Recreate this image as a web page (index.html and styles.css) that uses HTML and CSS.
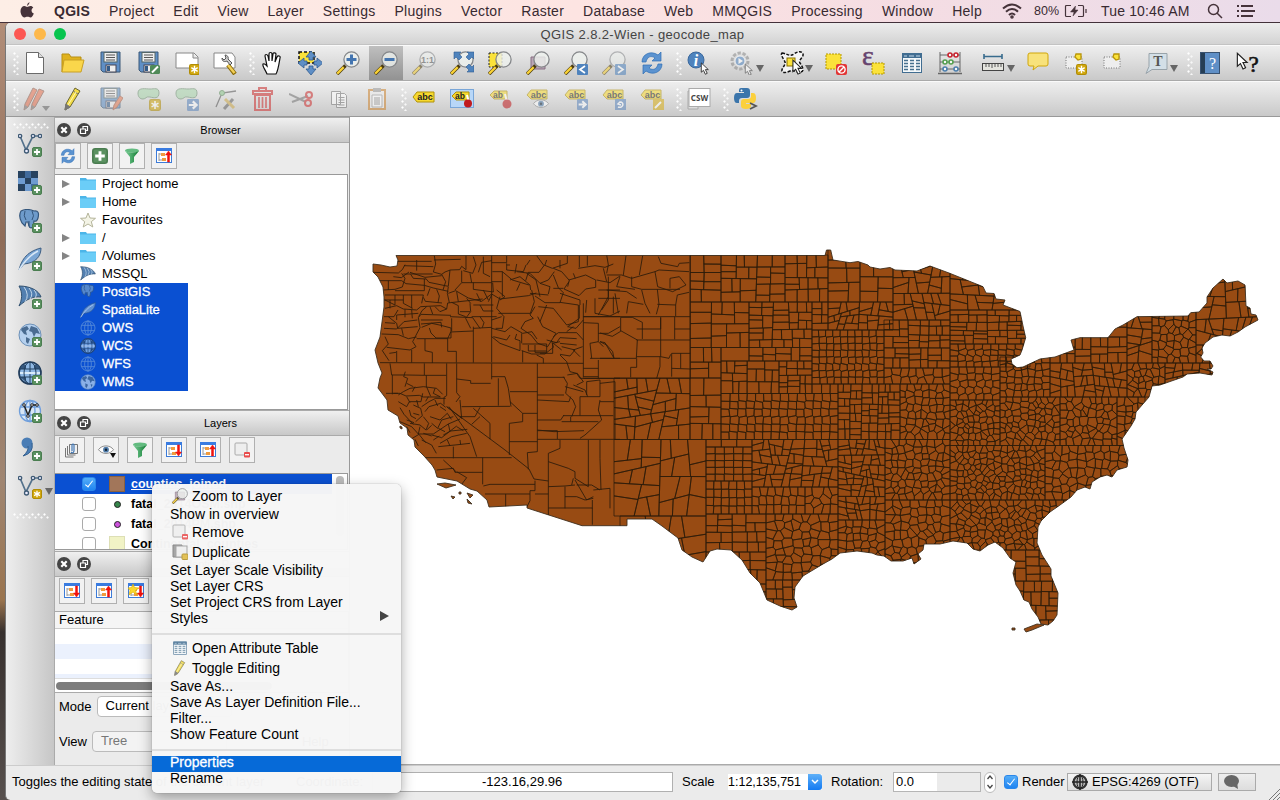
FILE: index.html
```html
<!DOCTYPE html>
<html lang="en">
<head>
<meta charset="utf-8">
<title>QGIS 2.8.2-Wien - geocode_map</title>
<link rel="stylesheet" href="styles.css">
</head>
<body>
<svg class="defs" width="0" height="0">
<defs>
<linearGradient id="gg" x1="0" y1="0" x2="1" y2="0"><stop offset="0" stop-color="#7ed09a"/><stop offset="1" stop-color="#0d7a2f"/></linearGradient>
<symbol id="plus" viewBox="0 0 10 10"><rect x=".5" y=".5" width="9" height="9" rx="1.5" fill="#5a9160" stroke="#4a7d50"/><path d="M5 2v6M2 5h6" stroke="#fff" stroke-width="1.8"/></symbol>
<symbol id="star" viewBox="0 0 10 10"><rect x=".5" y=".5" width="9" height="9" rx="1.5" fill="#d2a80e" stroke="#b08c05"/><path d="M5 1.7v6.6M2.1 3.4l5.8 3.2M2.1 6.6l5.8-3.2" stroke="#fff" stroke-width="1.3"/></symbol>
<symbol id="next" viewBox="0 0 10 10"><rect width="10" height="10" rx="1" fill="#5d87bd"/><path d="M1.500 5h5M4.800 2l3.200 3-3.200 3" stroke="#fff" stroke-width="1.800" fill="none"/></symbol>
<symbol id="mag" viewBox="0 0 24 24"><path d="M1 23l8.500-8.500" stroke="#4a3b10" stroke-width="3.600"/><path d="M1.200 22.600l6.500-6.500" stroke="#fad235" stroke-width="2.200"/><circle cx="15.500" cy="8.500" r="7.600" fill="#eef1ee" fill-opacity=".8" stroke="#85878a" stroke-width="1.300"/></symbol>
<symbol id="cur" viewBox="0 0 10 14"><path d="M1 1v10l2.400-2 2 4.200 2-1-2-4h3.200z" fill="#fff" stroke="#222" stroke-width=".9"/></symbol>
<symbol id="i-new" viewBox="0 0 24 24"><path d="M3.500 1.500h12l5 5v16h-17z" fill="#fff" stroke="#6a6a6a"/><path d="M15.500 1.500v5h5" fill="#ddd" stroke="#6a6a6a"/></symbol>
<symbol id="i-open" viewBox="0 0 24 24"><path d="M1 21V3h7l2 3h10v4" fill="#e0b21e" stroke="#b78f13"/><path d="M1 21L3 9h20l-3 12z" fill="#fad64b" stroke="#c9a024"/></symbol>
<symbol id="i-save" viewBox="0 0 24 24"><path d="M2 1h19v20H4l-2-2z" fill="#5f8fc6" stroke="#3b5878"/><rect x="5" y="1.500" width="13" height="9.500" fill="#eee" stroke="#566"/><path d="M7 4h9M7 6.500h9M7 9h9" stroke="#555"/><rect x="7" y="14" width="10" height="7" fill="#eee" stroke="#445"/><rect x="8" y="15" width="3" height="5" fill="#345b88"/></symbol>
<symbol id="i-saveas" viewBox="0 0 24 24"><use href="#i-save"/><rect x="13" y="14" width="10" height="9" rx="1.500" fill="#4f8a58"/><path d="M15 21.500l6-6" stroke="#fff" stroke-width="2"/></symbol>
<symbol id="i-comp" viewBox="0 0 24 24"><path d="M1 2h18l4 4v11H1z" fill="#fff" stroke="#888"/><path d="M18 2v5h5" fill="#e8e8e8" stroke="#888"/><use href="#star" x="14" y="13" width="11" height="11"/></symbol>
<symbol id="i-mgr" viewBox="0 0 24 24"><path d="M1 2h18l3 4v11H1z" fill="#fff" stroke="#888"/><path d="M15 14l7 9" stroke="#8a6a08" stroke-width="4.400"/><path d="M15 14l6.500 8" stroke="#f2cf56" stroke-width="2.500"/><path d="M9 7c0 4 3 4 5 3l3 4 2-2-4-4c1-2-1-4-3-4l1 3-2 2z" fill="#ccc" stroke="#555"/></symbol>
<symbol id="i-hand" viewBox="0 0 24 24"><path d="M7 23C5 18 2 15 3 13c2-1 3 1 4 2L5 5c0-2 2-2 3 0l1 5V3c0-2 3-2 3 0v7l1-7c0-2 3-1 3 0l-1 8 2-5c1-2 4-1 3 1-1 6-2 13-4 16z" fill="#fff" stroke="#111" stroke-width="1.200"/></symbol>
<symbol id="i-pansel" viewBox="0 0 24 24"><rect x="1" y="1" width="15" height="11" fill="#fbe23a" stroke="#111" stroke-width="1.500" stroke-dasharray="3 2"/><path d="M13 0l5 6h-3v3h-4V6H8zM13 24l5-6h-3v-3h-4v3H8zM0 12l6-5v3h3v4H6v3zM25 12l-6-5v3h-3v4h3v3z" fill="#5f8fc6" stroke="#2f5c92" stroke-width=".8"/></symbol>
<symbol id="i-in" viewBox="0 0 24 24"><use href="#mag"/><path d="M15.500 3.500v10M10.500 8.500h10" stroke="#4475b0" stroke-width="3"/></symbol>
<symbol id="i-out" viewBox="0 0 24 24"><use href="#mag"/><path d="M10.500 8.500h10" stroke="#4475b0" stroke-width="3"/></symbol>
<symbol id="i-one" viewBox="0 0 24 24"><use href="#mag"/><text x="15.500" y="12" font-size="9" font-weight="bold" text-anchor="middle" fill="#555">1:1</text></symbol>
<symbol id="i-full" viewBox="0 0 24 24"><use href="#mag"/><path d="M4 1h7L9 3l3 3-3 3-3-3-2 2zM24 1v7l-2-2-3 3-3-3 3-3-2-2zM24 21h-7l2-2-3-3 3-3 3 3 2-2z" fill="#4f83bd" stroke="#2f5c92" stroke-width=".6"/></symbol>
<symbol id="i-zsel" viewBox="0 0 24 24"><rect x="1" y="2" width="13" height="14" fill="#fbe23a" stroke="#222" stroke-dasharray="2 1.500"/><use href="#mag"/></symbol>
<symbol id="i-zlay" viewBox="0 0 24 24"><path d="M5 6h14v12H5z" fill="#b9a5b5" stroke="#876f82"/><use href="#mag"/></symbol>
<symbol id="i-zprev" viewBox="0 0 24 24"><use href="#mag"/><rect x="13" y="13" width="11" height="11" rx="1" fill="#4f83bd"/><path d="M21 15l-5 3.500 5 3.500" fill="none" stroke="#fff" stroke-width="1.700"/></symbol>
<symbol id="i-znext" viewBox="0 0 24 24"><use href="#mag"/><rect x="13" y="13" width="11" height="11" rx="1" fill="#4f83bd"/><path d="M16 15l5 3.500-5 3.500" fill="none" stroke="#fff" stroke-width="1.700"/></symbol>
<symbol id="i-ref" viewBox="0 0 24 24"><path d="M2 11C2 3 11-1 18 4l3-3v9h-9l3-3C11 4 7 6 6 11zM22 13c0 8-9 12-16 7l-3 3v-9h9l-3 3c4 3 8 1 9-4z" fill="#5b93d0" stroke="#2f6fb5" stroke-width=".7"/></symbol>
<symbol id="i-info" viewBox="0 0 24 24"><circle cx="9" cy="9" r="8" fill="#4f83bd" stroke="#3a689c"/><text x="9" y="15" font-size="16" font-family="Liberation Serif" font-style="italic" font-weight="bold" text-anchor="middle" fill="#fff">i</text><use href="#cur" x="13" y="11" width="10" height="13"/></symbol>
<symbol id="i-gear" viewBox="0 0 24 24"><circle cx="10" cy="10" r="8" fill="#d8d8d8" stroke="#888" stroke-width="3" stroke-dasharray="3.300 1.700"/><circle cx="10" cy="10" r="5" fill="#4f83bd" stroke="#fff"/><path d="M8.500 7v6l4.500-3z" fill="#fff"/><use href="#cur" x="14" y="12" width="10" height="13"/></symbol>
<symbol id="i-sel" viewBox="0 0 24 24"><path d="M2 2c6 1 8 4 12 1s8-3 9 0-5 6-3 9 5 8 1 9-7-3-11-1-7 2-8 0 4-6 3-9S0 4 2 2z" fill="#f5f5f5" stroke="#111" stroke-width="1.500" stroke-dasharray="3 1.500"/><rect x="7" y="7" width="8" height="8" fill="#fbe23a" stroke="#887000"/><use href="#cur" x="11" y="8" width="13" height="16"/></symbol>
<symbol id="i-desel" viewBox="0 0 24 24"><rect x="2" y="3" width="15" height="15" fill="#fbe23a" stroke="#b39700" stroke-dasharray="2 1"/><rect x="12" y="13" width="11" height="11" rx="2" fill="#e23535"/><circle cx="17.500" cy="18.500" r="3.600" fill="none" stroke="#fff" stroke-width="1.400"/><path d="M15 21l5-5" stroke="#fff" stroke-width="1.400"/></symbol>
<symbol id="i-eps" viewBox="0 0 24 24"><text x="0" y="14" font-size="28" font-family="Liberation Serif" fill="#67446f" stroke="#67446f" stroke-width=".5">ε</text><rect x="10" y="12" width="12" height="11" fill="#fbe23a" stroke="#b39700" stroke-dasharray="2 1"/></symbol>
<symbol id="i-table" viewBox="0 0 24 24"><rect x="2.500" y="2.500" width="19" height="19" fill="#f4f8fa" stroke="#416d91"/><path d="M2 3h20v4H2z" fill="#416d91"/><path d="M4 5h3m2 0h5m2 0h4" stroke="#c5d9e8"/><path d="M4 9.500h4m2 0h4m2 0h4M4 12.500h4m2 0h4m2 0h4M4 15.500h4m2 0h4m2 0h4M4 18.500h4m2 0h4m2 0h4" stroke="#47718f" stroke-width="1.300"/></symbol>
<symbol id="i-abac" viewBox="0 0 24 24"><path d="M2 1v20M22 1v20M2 4h20M2 11h20M2 18h20" stroke="#666" fill="none"/><path d="M0 22.500h24" stroke="#666" stroke-width="1.600"/><g fill="#f6f6f6" stroke-width="1.600"><g stroke="#c9242f"><circle cx="12" cy="4" r="2"/><circle cx="18" cy="4" r="2"/></g><g stroke="#55a050"><circle cx="7" cy="11" r="2"/><circle cx="13" cy="11" r="2"/></g><g stroke="#4c7fae"><circle cx="7" cy="18" r="2"/><circle cx="18" cy="18" r="2"/></g></g></symbol>
<symbol id="i-rule" viewBox="0 0 24 24"><path d="M3 3v5M21 3v5M3 5.500h18" stroke="#386b8d" stroke-width="1.600"/><rect x="1.500" y="12.500" width="21" height="7" fill="#e5e5df" stroke="#444"/><path d="M5 13v3M8 13v3M11 13v4M14 13v3M17 13v3M20 13v3" stroke="#555"/></symbol>
<symbol id="i-tip" viewBox="0 0 24 24"><path d="M4 2h16q2 0 2 2v9q0 2-2 2h-8l-5 4 1-4H4q-2 0-2-2V4q0-2 2-2z" fill="#f8e27b" stroke="#d0a60a"/></symbol>
<symbol id="i-bm" viewBox="0 0 24 24"><rect x="2" y="6" width="16" height="11" fill="#eee" stroke="#777" stroke-dasharray="1 1.500"/><path d="M12 3h5v5l-3 1-3-3z" fill="#fbe23a" stroke="#b99508" stroke-width="1.300"/></symbol>
<symbol id="i-bmn" viewBox="0 0 24 24"><use href="#i-bm"/><use href="#star" x="12" y="13" width="11" height="11"/></symbol>
<symbol id="i-text" viewBox="0 0 24 24"><path d="M4 2.500h18v16H7l-6 4 3-7z" fill="#d3dfe7" stroke="#98a3aa"/><text x="13" y="15" font-size="14" font-family="Liberation Serif" font-weight="bold" text-anchor="middle" fill="#555">T</text></symbol>
<symbol id="i-help" viewBox="0 0 24 24"><rect x="2.500" y="1.500" width="19" height="21" fill="#5f8fc6" stroke="#395270"/><path d="M3 2h4v20H3z" fill="#263e55"/><text x="14.500" y="18" font-size="16" font-family="Liberation Serif" text-anchor="middle" fill="#fff">?</text></symbol>
<symbol id="i-what" viewBox="0 0 24 24"><use href="#cur" x="0" y="1" width="13" height="18"/><text x="17.500" y="21" font-size="23" font-family="Liberation Serif" stroke="#111" stroke-width=".6" text-anchor="middle" fill="#111">?</text></symbol>
<symbol id="i-pen" viewBox="0 0 24 24"><path d="M4 23l1-6L14 1l5 3-10 16z" fill="#f3dc48" stroke="#6a6530"/><path d="M4 23l1-6 4 3zM12 4l5 3" fill="#777" stroke="#777"/><path d="M7 18l8-13" stroke="#fff8b8"/></symbol>
<symbol id="i-pens" viewBox="0 0 24 24"><g fill="#e5704f" stroke="#8b5b4a"><path d="M1 23l1-6L10 1l4 2L5 20z"/><path d="M8 23l1-6 7-15 5 2-9 16z"/></g><path d="M1 23l1-5 3 2zM8 23l1-5 3 2z" fill="#777"/></symbol>
<symbol id="i-saveed" viewBox="0 0 24 24"><use href="#i-save"/><path d="M14 23l1-5 6-9 3 2-6 9z" fill="#e67b55" stroke="#a65e45"/></symbol>
<symbol id="blob" viewBox="0 0 24 24"><path d="M1 6c0-6 8-4 12-4s9-2 9 4-5 5-9 4-4 2-7 2-5-2-5-6z" fill="#a8d5ab" stroke="#6d8f70"/></symbol>
<symbol id="i-addf" viewBox="0 0 24 24"><use href="#blob"/><use href="#star" x="12" y="12" width="12" height="12"/></symbol>
<symbol id="i-movf" viewBox="0 0 24 24"><use href="#blob"/><use href="#next" x="12" y="12" width="12" height="12"/></symbol>
<symbol id="i-node" viewBox="0 0 24 24"><path d="M3 20L9 6l14-2" fill="none" stroke="#555" stroke-width="1.300"/><circle cx="9" cy="6" r="2.500" fill="#8bc58b" stroke="#585"/><path d="M11 22l9-10" stroke="#666" stroke-width="3"/><path d="M12 12l9 9" stroke="#cda94b" stroke-width="3"/></symbol>
<symbol id="i-del" viewBox="0 0 24 24"><path d="M8 4V1h7v3M2 4h19v3H2zM4 8h15v15H4z" fill="none" stroke="#cf4f4f" stroke-width="2"/><path d="M8 10v11M11.500 10v11M15 10v11" stroke="#cf4f4f" stroke-width="1.700"/></symbol>
<symbol id="i-cut" viewBox="0 0 24 24"><path d="M0 7l17 8M3 15L19 9" stroke="#888" stroke-width="2"/><g fill="none" stroke="#cf4f4f" stroke-width="2"><circle cx="20" cy="8" r="3"/><circle cx="19" cy="16" r="3"/></g></symbol>
<symbol id="i-copy" viewBox="0 0 24 24"><g fill="#fff" stroke="#777"><path d="M4.500 4.500h9v13h-9zM9.500 6.500h8l2 2v12h-10z"/><path d="M11.500 10.500h6M11.500 13h6M11.500 15.500h6M11.500 18h6"/></g></symbol>
<symbol id="i-paste" viewBox="0 0 24 24"><path d="M4 3h16v19H4z" fill="#eee" stroke="#cc8430" stroke-width="2"/><path d="M8 1h8v4H8z" fill="#999"/><path d="M7 8h10v12H7z" fill="#fff" stroke="#999"/><path d="M9 11h6M9 13h6M9 15h6M9 17h6" stroke="#777"/></symbol>
<symbol id="tag" viewBox="0 0 24 24"><path d="M1 11l4-5h17v10H5z" fill="#f7d92e" stroke="#b0920b"/><text x="13" y="14" font-size="9" font-weight="bold" text-anchor="middle" fill="#222">abc</text></symbol>
<symbol id="tagd" viewBox="0 0 24 24"><path d="M1 8l4-5h16v9H5z" fill="#f7d92e" stroke="#b0920b"/><text x="12.500" y="10.500" font-size="9" font-weight="bold" text-anchor="middle" fill="#222">abc</text></symbol>
<symbol id="tagp" viewBox="0 0 24 24"><path d="M2 8l4-4h13v8H6z" fill="#f7d92e" stroke="#b0920b"/><text x="10" y="11" font-size="8.500" font-weight="bold" text-anchor="middle" fill="#222">ab</text><path d="M17 7l2 8" stroke="#fff" stroke-width="2"/></symbol>
<symbol id="i-pin" viewBox="0 0 24 24"><rect x=".5" y="2.500" width="23" height="18" fill="#b8d7f8" stroke="#79a6d8"/><use href="#tagp" y="1"/><circle cx="18" cy="16.500" r="4" fill="#c01b1f"/></symbol>
<symbol id="i-pin2" viewBox="0 0 24 24"><use href="#tagp"/><circle cx="19" cy="17" r="4.500" fill="#c01b1f"/></symbol>
<symbol id="eye" viewBox="0 0 24 24"><path d="M3 14c4-6 14-6 18 0-4 6-14 6-18 0z" fill="#fff" stroke="#777"/><circle cx="12" cy="14" r="3.500" fill="#527daa"/><circle cx="12" cy="14" r="1.500" fill="#123"/></symbol>
<symbol id="i-lsh" viewBox="0 0 24 24"><use href="#tagd"/><use href="#eye" x="5" y="5" width="20" height="20"/></symbol>
<symbol id="i-lmv" viewBox="0 0 24 24"><use href="#tagd"/><use href="#next" x="13" y="12" width="11" height="11"/></symbol>
<symbol id="i-lrt" viewBox="0 0 24 24"><use href="#tagd"/><rect x="13" y="12" width="11" height="11" fill="#5d87bd"/><path d="M16 20c5 2 7-5 2-5l-2 2 3 1" fill="none" stroke="#fff" stroke-width="1.500"/></symbol>
<symbol id="i-led" viewBox="0 0 24 24"><use href="#tagd"/><rect x="13" y="12" width="11" height="11" fill="#d8ae18"/><path d="M15 21l6-6" stroke="#fff" stroke-width="2"/></symbol>
<symbol id="i-csw" viewBox="0 0 24 24"><path d="M1 4h10v18H1z" fill="#ddd" stroke="#aaa"/><rect x="2" y="1.500" width="21" height="18" fill="#fff" stroke="#aaa"/><text x="12.500" y="13.500" font-size="8" font-weight="bold" font-family="Noto Sans" text-anchor="middle" fill="#444">CSW</text></symbol>
<symbol id="i-py" viewBox="0 0 24 24"><path d="M7 1h6q3 0 3 3v4q0 3-3 3H8q-3 0-3 3v2H3q-3 0-3-5t3-5h7V5H5V3q0-2 2-2z" fill="#3b75ab"/><path d="M17 6h2q3 0 3 5t-3 5h-7v1h5v2q0 3-5 3t-5-3v-4q0-3 3-3h4q3 0 3-3z" fill="#fbd03d"/><circle cx="7.500" cy="3.500" r="1" fill="#fff"/><path d="M16 16l6 3-6 3" fill="none" stroke="#555" stroke-width="1.800"/></symbol>
<symbol id="i-vec" viewBox="0 0 24 24"><path d="M2 3l6 14L15 3h6" fill="none" stroke="#54728c" stroke-width="1.700"/><g fill="#eef" stroke="#3e5a74" stroke-width="1.300"><circle cx="2" cy="3" r="1.700"/><circle cx="8.500" cy="18" r="2"/><circle cx="15" cy="3" r="1.700"/><circle cx="22" cy="3" r="1.700"/></g></symbol>
<symbol id="i-ras" viewBox="0 0 24 24"><rect width="20" height="20" fill="#6e9bd0"/><path d="M0 0h7v7H0zM13 0h7v7h-7zM7 7h6v6H7zM0 13h7v7H0z" fill="#27425f"/><path d="M7 0h6v7H7zM13 13h7v7h-7z" fill="#416b9c"/></symbol>
<symbol id="i-pg" viewBox="0 0 24 24"><path d="M3 2q6-3 13 0 6-1 4 7-1 4-4 3l-1 6q-3 2-4-1l-1-4H8l-1 4-3-3Q0 7 3 2z" fill="#6e9bcb" stroke="#34567c" stroke-width="1.200"/><path d="M7 2q-2 5 1 9M14 2q3 5 0 9m-3 1v5" fill="none" stroke="#34567c"/></symbol>
<symbol id="i-fea" viewBox="0 0 24 24"><path d="M1 23C3 15 7 5 23 1c0 8-5 15-17 16z" fill="#7ba6d4" stroke="#3c5d82"/><path d="M1 23C6 15 12 8 20 4" fill="none" stroke="#d8e7f6" stroke-width="1.500"/></symbol>
<symbol id="i-sql" viewBox="0 0 24 24"><path d="M1 1c12 0 20 5 22 11-8-1-14 2-22 9 3-6 4-13 0-20z" fill="#527fb0" stroke="#31506f"/><path d="M6 2q6 8 1 15M11 3q5 6 1 11M16 5q4 4 1 8" fill="none" stroke="#c3d7ea"/></symbol>
<symbol id="i-wms" viewBox="0 0 24 24"><circle cx="12" cy="12" r="11" fill="#b5d0ee" stroke="#6d91b8"/><path d="M4 5l5-2 2 3-3 2 1 4-3-1-3-4zM13 3l6 2 3 6-4-1-2 4-2-5-3-1zM8 14l4 2-2 5-2-2zM16 15l3 1-2 4z" fill="#4a6c91"/></symbol>
<symbol id="i-wcs" viewBox="0 0 24 24"><circle cx="12" cy="12" r="11" fill="#8fb8e4" stroke="#223d5c" stroke-width="1.700"/><path d="M4 4h4v4H2zM16 4h4l2 4h-6zM2 16h6v5zM16 16h6l-6 5z" fill="#35577d"/><path d="M12 1v22M1 8h22M1 16h22" stroke="#23405f"/><path d="M2 12h20" stroke="#d9ebfa" stroke-width="2"/><ellipse cx="12" cy="12" rx="6" ry="11" fill="none" stroke="#23405f"/></symbol>
<symbol id="i-ows" viewBox="0 0 24 24"><g fill="none" stroke="#6f9edb" stroke-width="1.300"><circle cx="12" cy="12" r="10.500"/><ellipse cx="12" cy="12" rx="5" ry="10.500"/><path d="M12 1v22M2 8h20M2 16h20"/></g></symbol>
<symbol id="i-wfs" viewBox="0 0 24 24"><circle cx="12" cy="12" r="11" fill="#d8e6f5"/><use href="#i-ows"/><path d="M6 6l4 10 4-10h5" fill="none" stroke="#222" stroke-width="1.500"/><g fill="#fff" stroke="#222"><circle cx="6" cy="6" r="1.300"/><circle cx="10" cy="17" r="1.300"/><circle cx="14" cy="6" r="1.300"/><circle cx="19" cy="6" r="1.300"/></g></symbol>
<symbol id="i-com" viewBox="0 0 24 24"><circle cx="9" cy="6" r="5.500" fill="#4a7db5"/><path d="M14 6q2 10-9 13 6-5 5-10" fill="#4a7db5" stroke="#34608f"/></symbol>
<symbol id="i-fil" viewBox="0 0 16 16"><ellipse cx="8" cy="2.500" rx="7" ry="2" fill="#63bb80"/><path d="M1 3q7 3 14 0L10 9v5l-4 2V9z" fill="url(#gg)"/></symbol>
<symbol id="tree" viewBox="0 0 16 16"><rect x=".5" y=".5" width="15" height="14" fill="#fff" stroke="#3c7bd8"/><path d="M0 0h16v3H0z" fill="#397be0"/><path d="M3 5v8M3 6h3M3 12h3" stroke="#999"/><path d="M5 5h4v3H5zM6 10h4v3H6z" fill="#f09b3d"/></symbol>
<symbol id="i-up" viewBox="0 0 16 16"><use href="#tree"/><path d="M12.500 3l3 4h-2v7h-2V7h-2z" fill="#f0120c" stroke="#f0120c" stroke-width=".5"/></symbol>
<symbol id="i-down" viewBox="0 0 16 16"><use href="#tree"/><path d="M12.500 14l3-4h-2V3h-2v7h-2z" fill="#f0120c" stroke="#f0120c" stroke-width=".5"/></symbol>
<symbol id="i-dstar" viewBox="0 0 16 16"><use href="#i-down"/><path d="M5 1l1.500 3.500L11 5 7.500 7.500 9 12 5 9l-4 3 1-4.500L0 5l3.500-.5z" fill="#fad82e" stroke="#d9a600" stroke-width=".6"/></symbol>
<symbol id="i-rem" viewBox="0 0 16 16"><rect x="1" y="1" width="12" height="12" rx="1" fill="#eee" stroke="#aaa"/><rect x="10" y="10" width="6" height="5.500" rx="1" fill="#e84b4b"/><path d="M11 12.700h4" stroke="#fff" stroke-width="1.300"/></symbol>
<symbol id="i-dup" viewBox="0 0 16 16"><path d="M1 1h9v12H1z" fill="#999" stroke="#777"/><rect x="4" y="2" width="11" height="11" fill="#eee" stroke="#999"/><rect x="10" y="10" width="6" height="5.500" rx="1" fill="#dfb83c" stroke="#af8c20"/></symbol>
<symbol id="i-grp" viewBox="0 0 16 16"><g fill="none" stroke="#777"><path d="M1.500 6v9h8M3.500 4v9h8M5.500 2.500h8v9h-8z"/></g><path d="M8 9V3q1-2 2 0v6q-1 3-3 1" fill="none" stroke="#4579b5" stroke-width="1.200"/></symbol>
<symbol id="i-fold" viewBox="0 0 16 16"><path d="M0 2h6l1 1.500h9V14H0z" fill="#4cb5e8"/><path d="M0 4.500h16V14H0z" fill="#6bcdf7"/></symbol>
<symbol id="i-fav" viewBox="0 0 16 16"><path d="M8 1l2 5 5.500.3-4.200 3.400 1.500 5.300L8 12l-4.800 3 1.500-5.300L.5 6.300 6 6z" fill="#f4f4e6" stroke="#b4b49a"/></symbol>
<symbol id="i-close" viewBox="0 0 14 14"><circle cx="7" cy="7" r="7" fill="#454545"/><path d="M4.300 4.300l5.400 5.400M9.700 4.300L4.300 9.700" stroke="#fff" stroke-width="2.200"/></symbol>
<symbol id="i-float" viewBox="0 0 14 14"><circle cx="7" cy="7" r="7" fill="#454545"/><path d="M6 6V3.500h4.500v4H8.500M3.500 6h5v4.500h-5z" fill="none" stroke="#fff" stroke-width="1.200"/></symbol>
</defs>
</svg>

<div class="desktop">
<header class="menubar">
<svg class="apple" viewBox="0 0 14 16"><path d="M9.500 0Q9.700 2.500 7 4 6.800 1.500 9.500 0zM7 5c1 0 2-1 3.500-1 1.200 0 2.200.6 2.800 1.500-2.600 1.700-2.200 5 .5 6-.7 2-2 4-3.300 4-1.200 0-1.600-.7-3-.7s-1.900.7-3 .7C2.500 15.500.5 12 .5 9c0-3 1.800-5 4-5C5.700 4 6.500 5 7 5z" fill="#45333a"/></svg>
<nav class="menus"><b>QGIS</b><span>Project</span><span>Edit</span><span>View</span><span>Layer</span><span>Settings</span><span>Plugins</span><span>Vector</span><span>Raster</span><span>Database</span><span>Web</span><span>MMQGIS</span><span>Processing</span><span>Window</span><span>Help</span></nav>
<div class="tray">
<svg width="20" height="16" viewBox="0 0 20 16" fill="none" stroke="#45333a" stroke-width="2"><path d="M1 5.500q9-8 18 0M4 8.700q6-5.500 12 0M7 12q3-3 6 0"/><circle cx="10" cy="14" r=".8"/></svg>
<span class="pct">80%</span>
<svg width="24" height="14" viewBox="0 0 24 14" fill="none" stroke="#45333a" stroke-width="1.200"><path d="M7 1.500H2.500q-1 0-1 1v9q0 1 1 1H7M14 1.500h4.500q1 0 1 1v9q0 1-1 1H14M22 5v4"/><path d="M11.500 2L6.500 8H10l-1 4 5-6h-3z" fill="#45333a" stroke-width=".5"/></svg>
<span class="clock">Tue 10:46 AM</span>
<svg width="16" height="16" viewBox="0 0 16 16" fill="none" stroke="#45333a" stroke-width="1.500"><circle cx="6.500" cy="6.500" r="5"/><path d="M10 10l5 5"/></svg>
<svg class="bars" width="18" height="12" viewBox="0 0 18 12" stroke="#45333a" stroke-width="2"><path d="M0 1h2M4 1h12M0 6h2M4 6h14M0 11h2M4 11h12"/></svg>
</div>
</header>

<main class="window">
<div class="titlebar"><div class="lights"><i class="red"></i><i class="amber"></i><i class="green"></i></div>QGIS 2.8.2-Wien - geocode_map</div>

<div class="toolbar">
<i class="grip first"></i>
<div class="t"><svg><use href="#i-new"/></svg></div><div class="t"><svg><use href="#i-open"/></svg></div><div class="t"><svg><use href="#i-save"/></svg></div><div class="t"><svg><use href="#i-saveas"/></svg></div><div class="t"><svg><use href="#i-comp"/></svg></div><div class="t"><svg><use href="#i-mgr"/></svg></div>
<i class="grip"></i>
<div class="t"><svg><use href="#i-hand"/></svg></div><div class="t"><svg><use href="#i-pansel"/></svg></div><div class="t"><svg><use href="#i-in"/></svg></div><div class="t pressed"><svg><use href="#i-out"/></svg></div><div class="t off"><svg><use href="#i-one"/></svg></div><div class="t"><svg><use href="#i-full"/></svg></div><div class="t"><svg><use href="#i-zsel"/></svg></div><div class="t"><svg><use href="#i-zlay"/></svg></div><div class="t"><svg><use href="#i-zprev"/></svg></div><div class="t off"><svg><use href="#i-znext"/></svg></div><div class="t"><svg><use href="#i-ref"/></svg></div>
<i class="grip"></i>
<div class="t"><svg><use href="#i-info"/></svg></div><div class="t drop"><svg class="off"><use href="#i-gear"/></svg></div><div class="t drop"><svg><use href="#i-sel"/></svg></div><div class="t"><svg><use href="#i-desel"/></svg></div><div class="t"><svg><use href="#i-eps"/></svg></div><div class="t"><svg><use href="#i-table"/></svg></div><div class="t"><svg><use href="#i-abac"/></svg></div><div class="t drop"><svg><use href="#i-rule"/></svg></div><div class="t"><svg><use href="#i-tip"/></svg></div><div class="t"><svg><use href="#i-bmn"/></svg></div><div class="t"><svg><use href="#i-bm"/></svg></div><div class="t drop"><svg><use href="#i-text"/></svg></div>
<i class="grip"></i>
<div class="t"><svg><use href="#i-help"/></svg></div><div class="t"><svg><use href="#i-what"/></svg></div>
</div>

<div class="toolbar second">
<i class="grip first"></i>
<div class="t off mini"><svg><use href="#i-pens"/></svg></div><div class="t"><svg><use href="#i-pen"/></svg></div><div class="t off"><svg><use href="#i-saveed"/></svg></div><div class="t off"><svg><use href="#i-addf"/></svg></div><div class="t off"><svg><use href="#i-movf"/></svg></div><div class="t off"><svg><use href="#i-node"/></svg></div><div class="t dim"><svg><use href="#i-del"/></svg></div><div class="t dim"><svg><use href="#i-cut"/></svg></div><div class="t off"><svg><use href="#i-copy"/></svg></div><div class="t off"><svg><use href="#i-paste"/></svg></div>
<i class="grip"></i>
<div class="t"><svg><use href="#tag" y="-1"/></svg></div><div class="t"><svg><use href="#i-pin"/></svg></div><div class="t off"><svg><use href="#i-pin2"/></svg></div><div class="t off"><svg><use href="#i-lsh"/></svg></div><div class="t off"><svg><use href="#i-lmv"/></svg></div><div class="t off"><svg><use href="#i-lrt"/></svg></div><div class="t off"><svg><use href="#i-led"/></svg></div>
<i class="grip"></i>
<div class="t"><svg><use href="#i-csw"/></svg></div>
<i class="grip"></i>
<div class="t"><svg><use href="#i-py"/></svg></div>
</div>

<div class="work">
<aside class="side">
<i class="hgrip"></i>
<div class="s"><svg><use href="#i-vec"/><use href="#plus" x="14" y="14" width="10" height="10"/></svg></div>
<div class="s"><svg><use href="#i-ras"/><use href="#plus" x="14" y="14" width="10" height="10"/></svg></div>
<div class="s"><svg><use href="#i-pg"/><use href="#plus" x="14" y="14" width="10" height="10"/></svg></div>
<div class="s"><svg><use href="#i-fea"/><use href="#plus" x="14" y="14" width="10" height="10"/></svg></div>
<div class="s"><svg><use href="#i-sql"/><use href="#plus" x="14" y="14" width="10" height="10"/></svg></div>
<div class="s"><svg><use href="#i-wms"/><use href="#plus" x="14" y="14" width="10" height="10"/></svg></div>
<div class="s"><svg><use href="#i-wcs"/><use href="#plus" x="14" y="14" width="10" height="10"/></svg></div>
<div class="s"><svg><use href="#i-wfs"/><use href="#plus" x="14" y="14" width="10" height="10"/></svg></div>
<div class="s"><svg><use href="#i-com"/><use href="#plus" x="14" y="14" width="10" height="10"/></svg></div>
<div class="s more"><svg><use href="#i-vec"/><use href="#star" x="14" y="14" width="10" height="10"/></svg></div>
<i class="hgrip low"></i>
</aside>

<section class="docks">
<div class="dock browser">
<h2><svg><use href="#i-close"/></svg><svg><use href="#i-float"/></svg><span>Browser</span></h2>
<div class="tools"><b><svg><use href="#i-ref"/></svg></b><b><svg><use href="#plus"/></svg></b><b><svg><use href="#i-fil"/></svg></b><b><svg><use href="#i-up"/></svg></b></div>
<ul class="tree">
<li class="exp"><svg><use href="#i-fold"/></svg>Project home</li>
<li class="exp"><svg><use href="#i-fold"/></svg>Home</li>
<li><svg><use href="#i-fav"/></svg>Favourites</li>
<li class="exp"><svg><use href="#i-fold"/></svg>/</li>
<li class="exp"><svg><use href="#i-fold"/></svg>/Volumes</li>
<li><svg><use href="#i-sql"/></svg>MSSQL</li>
<li class="on"><svg><use href="#i-pg"/></svg>PostGIS</li>
<li class="on"><svg><use href="#i-fea"/></svg>SpatiaLite</li>
<li class="on"><svg><use href="#i-ows"/></svg>OWS</li>
<li class="on"><svg><use href="#i-wcs"/></svg>WCS</li>
<li class="on"><svg><use href="#i-ows"/></svg>WFS</li>
<li class="on"><svg><use href="#i-wms"/></svg>WMS</li>
</ul>
</div>
<div class="dock layers">
<h2><svg><use href="#i-close"/></svg><svg><use href="#i-float"/></svg><span>Layers</span></h2>
<div class="tools"><b><svg><use href="#i-grp"/></svg></b><b class="eyeb"><svg><use href="#eye" y="-2"/></svg></b><b><svg><use href="#i-fil"/></svg></b><b><svg><use href="#i-down"/></svg></b><b><svg><use href="#i-up"/></svg></b><b><svg><use href="#i-rem"/></svg></b></div>
<div class="list">
<div class="lay cur"><i class="chk yes"></i><i class="sw brown"></i><span>counties_joined</span></div>
<div class="lay"><i class="chk"></i><i class="dot green"></i><span>fatal_2014OSM.shp</span></div>
<div class="lay"><i class="chk"></i><i class="dot pink"></i><span>fatal_2014PM.shp</span></div>
<div class="lay"><i class="chk"></i><i class="sw cream"></i><span>Continental_counties</span></div>
<i class="vbar"></i>
</div>
</div>
<div class="dock ident">
<h2><svg><use href="#i-close"/></svg><svg><use href="#i-float"/></svg><span>Identify Results</span></h2>
<div class="tools"><b><svg><use href="#i-down"/></svg></b><b><svg><use href="#i-up"/></svg></b><b><svg><use href="#i-dstar"/></svg></b></div>
<div class="feat"><div class="fh">Feature</div><div class="stripes"></div><div class="hbar"><i></i></div></div>
<div class="form mode"><span>Mode</span><span class="combo">Current layer</span></div>
<div class="form view"><span>View</span><span class="combo grey">Tree</span><span class="hlp">Help</span></div>
</div>
</section>

<section class="canvas">
<svg id="map" width="930" height="648" viewBox="350 117 930 648">
<defs><clipPath id="land"><path id="coast" d="M396 255.500H825L826.500 250H830.700L833 260 850 262.700 858 261.500 868 265 870 267 880 269 890 267.500 895 270 917 271 930 266 949 273 983 286.700 986 293 994 293.500 996 299 1005 300 1003 305 1020 311.500 1023 326 1025.700 337.700 1022 350 1020 355 1011 359 1012 364 1017 367.700 1023 367 1040 359 1055 357 1074 350 1071 340 1080 337.700H1108L1115 329 1123 325 1137 316.700 1188 316 1190.700 312.700 1199 312 1207 303 1207 297 1213 288 1223 279 1227 283 1238 281 1245 285 1246 306 1250 308 1251 314 1256 315 1258 320 1245 327 1238 332 1230 336 1222 335 1213 337 1205 343 1202 348 1203 353 1200.700 357 1204 361 1210 361 1213 366 1211 369 1207 369 1213 372 1212 375 1200 373 1187 374 1183 377 1160 385 1152 386 1149 397 1136 412 1135 419 1131 426 1122 439 1124 448 1128 460 1127 467 1117 470 1112 477 1107 475 1100 477 1092 482 1090 489 1085 487 1077 490 1071 497 1060 505 1050 512 1041 521 1038 527 1037 543 1042 555 1051 569 1051 576 1058 593 1057 615 1053 621 1048 625 1041 624 1038 617 1032 609 1029 602 1024 600 1020 591 1016 585 1013 573 1016 562 1010 558 1003 548 995 542 988 545 980 551 973 549 967 543 953 541 940 544H924L923 550 918 554 921 559 914 564 912 558 903 561 891 561 884 556 877 555 872 553 857 551 840 553 832 559 823 564 803 576 795 587 794 598 797 607 792 610 780 606 767 600 760 583 750 573 742 560 731 550 717 549 710 551 703 562 692 557 682 550 678 538 662 526 652 519H627V525.700H582L527 508 527 505 489 507 487 500 477 491 470 489 457 481 437 477 435 470 432 465 424 456 415 447 414 440 408 435 407 428 400 423 398 416 388 410 387 400 378 388 380 378 382 373 378 363 375 350 380 337 382 322 384 307 384 297 383 287 378 277 373 272 373 264 381 265 390 267 397 266 398 260Z"/></clipPath></defs>
<g class="land">
<use href="#coast"/>
<path d="M437 484l8-1 11 2-10 3zM451 496l4 1-2 2zM459 492h2v2h-2zM467 493l6 2-3 3zM467 499l5 5-4-1zM400 426l2 1v2l-2-1zM1024 629l13-5 7 1-12 5-6 2zM1012 628h3v2h-3z"/>
</g>
<g clip-path="url(#land)">
<g id="counties" class="lines"></g>
<g class="lines" transform="translate(360 240) scale(.33333)">
<path d="M223 47l4 25-7 24 25 7 10-7 16-6 28-1 6-10 13 10V47M110 64h105M132 77l88 3M40 97l75 2 12-10 8-15M130 102h88M100 110l24 3 23-17M60 122h65l13 9 55 5M70 150l35-2 22-7M105 152h88v-35M105 165h85M150 97l45 15 50-5M190 165l-5 25M155 165v40M130 165v25l28 15M105 165v30l-30-15M70 180h60M193 136l27 8 45 10M197 115l10 12 58 12M265 140l-3 20 6 28M190 172l6 12 50 5M200 200l-14 12-10 18M75 205l35-8 20 10 40 3 12-10 60-3 18 10 3-18 105-12M72 230h30l12-20M85 230l25 20 3 15 60-5M72 265l38 2 22-22 40-5M65 282l50 2 30 12 25-5M110 240v-15l65-5M168 320l-10-15 22-42-5-30 8-10 90 3M183 240h65M183 252l60-5 2 15M185 262l30-12 28 6 30 8v30h-45l-15-15-5-15M75 290l10 22-18 20 20 30M80 322l70 8 18-10M110 333v33M155 330v38M88 340l20-3M60 368l610 2M195 297v35l22 5v32M170 296h93l9-20 68-3M263 296v38h26v34M340 260v108M275 235v38M340 265l55-3M395 47v320M270 230l68 3 22 32M90 370l5 35 45 0 53 1v-36M193 406h66M199 406v35M260 370v97l-8 5v22M290 370v88l10 12-12 16M290 417l42 5 0 8h60M97 405v58M135 440l8-25-12-5 5-15M100 460l20 0M78 460h36M115 465l15-10 20-10 40-5 40 5 18 18M120 460l18 8 40-2 12 5 52 0M115 485l25 15 8-15 35 0 5-25M120 503l12 20 28 30M148 510l5 18 15 8M160 495l22 10 5 22-20 18M185 500l22-15 20-10 30 0M195 515l12-15 35-10 15 12M190 530l16 20-8 20-18-15-30-5M210 530l30 10 22-20 12 18M215 550l18 15 12-25 35-10M120 545l35 15 20 22 45 0 45-30 35-15M140 560l10 18M152 598l25-15 20 25M185 600l30 15 14 25M165 598l10 20M215 585l30 8 45-35M240 610l35-20 45-10M250 585l22-12 50-5M235 620l50-5 45-5M280 620v35M195 653h260M250 660l38 35M368 653v80M230 690l50-5 5 12h83M290 695l30 18-15 20M370 738l20-5h135M375 762h135M437 762v40M350 650l-20-60-35-50-28-40M260 500l45 35-5-55M260 500l175 130 72 57 15 30 43 6M300 530h45l15-28M340 505l50 45v48M360 530l-25 23M305 500l145-1M395 410h40l10 35 8 55M415 415v82M450 455h82M395 418v-48M532 370v265l-30 3 3 50M450 485l38 35h44M488 520v25l-40 5v95M448 605h84M532 412h82M532 465h80M532 480l95 5 5-15M532 540h70l10-15M532 570l50 5 90-3M532 598h248M525 722v30h-15v30l-10 20M525 762h40M565 640v190M565 640l35-15v-25M565 665l60 20 20 10v20l40 25 0-140M565 740l50-2 30-3M615 740l0 65M615 770h35l25 10 25-5M565 804h132v50M720 600v55l3 95M700 750l50-5v60M697 780v25M645 720l35 60 20-10M650 735l45 0 25 15M640 715l-5 20"/>
<path d="M395 68h45v-20M440 70v20l50 5 8-20M397 95h30l30 25 50 15M427 95v75M395 125h30M305 128l90 0M305 92v35M340 128l0 20 60 8-2-28M355 97l10-30 30-5M370 50v50l20 10M340 50l8 25-10 25-28-8M265 160l22-8 38 22 40 10 30-22 25 15 85-10 24-8M395 165l-10 20M450 120l30-10 30 25 2 15M470 95l40 5 30 30 25-10 18-25M530 47l22 30-15 20-32 0-8 25M500 100l28 20 12 50M552 75l25 10 45-15 0-22M580 85l25 10 22 25 50-15 30 15v22l-30 5-20 20-45-20 15-22M580 105l15 38 15 15-10 30-45 0-30-20M515 150l8 35-12 35M415 220h96M420 170l-10 35 22 25-5 35-20 0M395 240l30-10M330 190l2 25-15 20 15 30M335 230l75 0M340 195l60 0M275 187l20 10v25l22 8M350 160l12 25M370 150l15 30M410 150l25 20-15 10M525 200l-15 25 10 10-25 10-12 20 30 20 20 25 30 10 25-40-40-20-15-30M535 200l45 5 40 50 35-10v-50l-55-8M560 195l-20 50M510 160l55 5M600 160l60 20 0 15M658 195v40l-35 25 25 5 22-25M395 265l40 10 18-15 35 20 28-5 15 22M400 290l40 10 10-15M395 290l25 20 60 22v-30l-15-5 5-15M485 332l30 10 40 0 25-20-5-20M487 312h73v25h-35v-22M505 315v18h55M488 332v35M530 345l20 10 0 15M485 280v30M540 340h38v-30l22-5M580 310l25 20M560 300l30 8 10-15 50 3M580 290l15-12h55l20 22M600 310l50 5M605 320l40 10-15 18-30-5M640 330l20 20M600 345l20 20M670 190v222M670 230h110M640 260l-20 15M640 330l28-10M620 365l10 30 20 5 10 15h120M610 410l12 20-5 30 22 20 8 20-12 30M622 405l30-5 18 25-20 10M640 435l35 15 8 20M660 470v57M660 470h60v-50l-40 5v40M615 440l55 15M720 430l45-5v175M720 480l-5 30 10 30-50 45-15 10M720 485h42M610 527h150M605 545h110M632 530v15M532 572l60 0v25M670 385h45M670 410l45 0M715 415v-55M690 355h90M690 310l25-5 15 15M715 305v-55l-45-2M715 280l30 0 35-20M690 310l5 45M720 305l20 10 18 20 4 20M658 47v35M682 47v30M655 85l50-8 30 5 25-10M628 120l-5 20M730 85l10 40M710 120l40 8 30-20M715 150h65M715 175h65M745 110v60l-30 55M705 175v45l45 8 30-15M760 170v50M680 180l-3 38"/>
<path d="M222 60l80-2M245 103l12 22-8 25M270 90l-5 48M170 60v32M152 103l8 12 38 2M85 122v28M125 100l10 15-8 26M75 165h30M90 180v25M135 208v24M155 210l2 25M210 200l8 22M225 200l15 15 20-8M75 248l30 2M125 265l5 22M210 145l-8 22M230 148l8 20-4 20M290 155l5 30M320 175l12 15M305 128l-20 22M330 100l5 28M300 215h30M360 195l10 18 30 0M360 230l12 18-5 15M470 72l-5 28M450 75h-10M510 60l-10 15M560 60l-5 15M480 130l-10 22M540 130l30 10-5 22M580 145l30 0M640 100l6 15M600 60v25M140 430l20 10M165 440l-8 15M200 441l12 28M225 445l-5 15 20 10M140 470l10 18M170 480l5 20M205 470l-8 14M225 480l8 18M240 500l18 12M160 520l18 5M140 540l22 8M180 560l-5 22M200 570l15-14M235 565l20 10M265 552l5 22M290 560l20 12M190 580l25 8M220 600l18-12M262 600l8 18M300 600l2 14"/>
</g>
<g class="lines" transform="translate(600 240) scale(.33333)">
<path d="M-50 230h321M271 45v370M-50 415h321M62 232v42l-25 15-37-10M62 272l50 28-3 55H0M62 232h35l30 15v50M110 267h72v-35M182 232v118l25 5 5-12M110 300h160M110 350h72M180 350v30l-10 35M110 355v27H92v30M224 230v68M224 267h47M215 410v-70h56M215 385l56 2M242 340v45M0 305l15 3 26 45M20 45l5 30-5 25M78 47l-8 58M128 47l-10 58M175 50l8 20 50 10 5-10 30-2M20 105l45 0 30 10 70-20 12-5 90 5M165 95l8 45 45 15 40-20-20-25-28 5v30M95 110v30l30 8 115 0M172 148l5 45-8 30M172 193l55 2 5-30 35-8M227 195v33M125 150l10 40 15 30M60 110l-10 30 55 8M20 150l60 5 30 20M85 185l-5 35M85 185l45 8M25 150v30l-20 30M45 160l10 60"/>
</g>
</g>
</svg>
</section>
</div>

<footer class="status">
<span class="msg">Toggles the editing state of the current layer</span>
<span class="crd">Coordinate:</span>
<span class="coord">-123.16,29.96</span>
<span class="scl">Scale</span>
<span class="scale">1:12,135,751<i><svg width="8" height="6" viewBox="0 0 8 6"><path d="M1 1l3 3 3-3" fill="none" stroke="#fff" stroke-width="1.500"/></svg></i></span>
<span class="rotl">Rotation:</span>
<span class="rot">0.0<i></i></span>
<span class="spin"><svg width="10" height="18" viewBox="0 0 10 18"><path d="M2.500 6L5 3l2.500 3M2.500 12L5 15l2.500-3" fill="none" stroke="#444" stroke-width="1.300"/></svg></span>
<i class="chk yes"></i><span class="ren">Render</span>
<span class="epsg"><svg width="16" height="16" viewBox="0 0 16 16"><circle cx="8" cy="8" r="6.500" fill="#bbb" stroke="#333" stroke-width="2.200"/><path d="M8 0v16M0 8h16" stroke="#222" stroke-width="1.500"/><ellipse cx="8" cy="8" rx="3" ry="6.500" fill="none" stroke="#222"/></svg>EPSG:4269 (OTF)</span>
<span class="log"><svg width="18" height="16" viewBox="0 0 18 16"><ellipse cx="8.500" cy="7" rx="7.500" ry="6" fill="#666"/><path d="M10 12l5 3-1-7z" fill="#666"/></svg></span>
<svg class="resize" width="12" height="12" viewBox="0 0 12 12"><path d="M1 12L12 1M5 12l7-7M9 12l3-3" stroke="#777"/></svg>
</footer>
</main>

<div class="menu">
<div class="ic"><svg><use href="#i-zlay"/></svg>Zoom to Layer</div>
<div>Show in overview</div>
<div class="ic"><svg><use href="#i-rem"/></svg>Remove</div>
<div class="ic"><svg><use href="#i-dup"/></svg>Duplicate</div>
<div>Set Layer Scale Visibility</div>
<div>Set Layer CRS</div>
<div>Set Project CRS from Layer</div>
<div class="sub">Styles</div>
<hr>
<div class="ic"><svg><use href="#i-table"/></svg>Open Attribute Table</div>
<div class="ic"><svg><use href="#i-pen"/></svg>Toggle Editing</div>
<div>Save As...</div>
<div>Save As Layer Definition File...</div>
<div>Filter...</div>
<div>Show Feature Count</div>
<hr>
<div class="hot">Properties</div>
<div>Rename</div>
</div>
</div>
<script src="map.js"></script>
</body>
</html>
```
FILE: styles.css
```css
* { box-sizing: border-box; }
body { margin: 0; width: 1280px; height: 800px; overflow: hidden; font: 13px/18px "Liberation Sans", Arial, sans-serif; color: #000; }
.defs { position: absolute; }
.desktop { position: relative; width: 1280px; height: 800px; display: flex; flex-direction: column; background: linear-gradient(#b5917c, #8f6c58 30%, #a08672 60%, #9a744e 75%, #37302e 79%, #57504d); }
.menubar { flex: none; height: 23px; display: flex; align-items: center; padding-left: 20px; background: linear-gradient(90deg, #fdeee6, #fde4e2 45%, #f5dde3 70%, #eadcea); border-bottom: 1px solid #43313a; color: #382a31; font-size: 14px; }
.apple { width: 14px; height: 16px; margin: -2px 20px 0 0; }
.menus { display: flex; gap: 19px; letter-spacing: .25px; width: 948px; white-space: nowrap; }
.tray { display: flex; align-items: center; white-space: nowrap; }
.pct { font-size: 12.500px; margin: 0 5px 0 12px; }
.clock { margin: 0 18px 0 13px; letter-spacing: .15px; }
.bars { margin-left: 14px; }
.window { flex: 1; min-height: 0; margin-left: 5px; display: flex; flex-direction: column; background: #ebebeb; border-radius: 5px 0 0 5px; border-left: 1px solid #777; overflow: hidden; }
.titlebar { flex: none; position: relative; height: 22px; padding-right: 1px; text-align: center; line-height: 23px; color: #444; letter-spacing: .38px; background: linear-gradient(#ededed, #d3d3d3); border-bottom: 1px solid #c3c3c3; }
.lights { position: absolute; left: 8px; top: 5px; display: flex; gap: 8px; }
.lights i { width: 12px; height: 12px; border-radius: 50%; }
.red { background: #fc5753; }
.amber { background: #fdb84a; }
.green { background: #07c44e; }
.toolbar { flex: none; height: 36px; display: flex; align-items: stretch; padding-left: 10px; background: linear-gradient(#eee, #c9c9c9); border-top: 1px solid #fafafa; border-bottom: 1px solid #aaa; position: relative; }
.toolbar.second { border-bottom-color: #999; }
.t { flex: none; width: 38px; display: flex; align-items: center; justify-content: center; position: relative; }
.t svg { width: 24px; height: 24px; overflow: visible; margin-top: -1px; }
.off { opacity: .55; }
.dim { opacity: .68; }
.pressed { background: linear-gradient(#bfbfbf, #929292); background-size: 34px 100%; background-repeat: no-repeat; background-position: center; }
.drop { width: 49.500px; justify-content: flex-start; padding-left: 12px; }
.drop::after, .mini::after, .more::after { content: ""; position: absolute; right: 4px; top: 19px; border: 4px solid transparent; border-top: 7px solid #666; border-bottom: 0; }
.mini::after { right: 4px; top: 24px; border-top-width: 5px; }
.grip { flex: none; width: 9px; position: relative; }
.grip::after { content: ""; position: absolute; left: 5px; top: 6px; width: 6px; height: 23px; background: radial-gradient(circle at 1.500px 1.500px, #fff .7px, transparent 1.500px) 0 0/6px 6px, radial-gradient(circle at 4.500px 4.500px, #f7f7f7 .7px, transparent 1.500px) 0 0/6px 6px; }
.grip.first { width: 0; }
.grip.first::after { left: -3px; }
.work { flex: 1; min-height: 0; display: flex; }
.side { flex: none; width: 49px; background: linear-gradient(90deg, #eee, #c6c6c6); border-right: 1px solid #aaa; padding-top: 8px; }
.hgrip { display: block; width: 36px; height: 6px; margin: -2px 0 -1px 7px; background: radial-gradient(circle at 1.500px 1.500px, #fff .7px, transparent 1.500px) 0 0/6px 6px, radial-gradient(circle at 4.500px 4.500px, #f7f7f7 .7px, transparent 1.500px) 0 0/6px 6px; }
.s { height: 38px; padding: 5px 0 0 12px; position: relative; }
.s svg { width: 24px; height: 24px; overflow: visible; }
.more::after { right: 1px; top: 18px; }
.hgrip.low { margin-top: 5px; }
.docks { flex: none; width: 295px; display: flex; flex-direction: column; border-right: 1px solid #999; background: #ebebeb; }
.dock { flex: none; display: flex; flex-direction: column; }
.browser { height: 293px; }
.layers { height: 141px; }
.ident { height: 214px; }
h2 { flex: none; margin: 0; height: 26px; display: flex; align-items: center; gap: 6px; padding-left: 2px; background: linear-gradient(#f0f0f0, #c8c8c8); border-bottom: 1px solid #aaa; border-top: 1px solid #aaa; font: 11px/24px "Liberation Sans", Arial, sans-serif; position: relative; }
h2 svg { width: 14px; height: 14px; }
h2 span { position: absolute; left: 37px; right: 0; text-align: center; }
.tools { flex: none; display: flex; height: 31px; }
.tools b { width: 26px; height: 26px; margin-right: 6px; border: 1px solid #b0b0b0; background: #f2f2f2; display: flex; align-items: center; justify-content: center; position: relative; }
.tools svg { width: 16px; height: 16px; }
.layers .tools { height: 37px; padding: 1px 0 0 4px; }
.layers .tools b { margin-right: 8px; }
.layers .tools .eyeb svg { width: 20px; height: 20px; }
.eyeb::after { content: ""; position: absolute; right: 2px; bottom: 4px; border: 3.500px solid transparent; border-top: 5px solid #111; border-bottom: 0; }
.ident .tools { height: 34px; padding: 1px 0 0 4px; }
.tree { flex: 1; margin: 0 1px 0 0; padding: 0; list-style: none; background: #fff; border: 1px solid #999; border-left: 0; }
.tree li { height: 18px; width: 133px; padding-left: 25px; display: flex; align-items: center; gap: 6px; position: relative; white-space: nowrap; }
.tree svg { width: 16px; height: 16px; }
.exp::before { content: ""; position: absolute; left: 7px; border: 4px solid transparent; border-left: 8px solid #858585; border-right: 0; }
.on { background: #0a50d2; color: #fff; -webkit-text-stroke: .3px #fff; }
.on svg { opacity: .75; }
.list { height: 77px; background: #fff; border: 1px solid #999; border-left: 0; margin-right: 1px; overflow: hidden; position: relative; }
.lay { height: 20px; display: flex; align-items: center; padding-left: 27px; font-weight: bold; font-size: 12.500px; width: 277px; }
.cur { background: #0a50d2; color: #fff; text-decoration: underline; }
.lay span { margin-left: 6px; }
.chk { flex: none; width: 14px; height: 14px; border: 1px solid #aaa; border-radius: 3px; background: #fff; }
.chk.yes { border-color: #2b87ea; background: linear-gradient(#55adf8, #1f84f2); position: relative; }
.chk.yes::after { content: ""; position: absolute; left: 4px; top: 1px; width: 3px; height: 7px; border: solid #fff; border-width: 0 1.500px 1.500px 0; transform: rotate(38deg); }
.sw { width: 16px; height: 16px; margin-left: 13px; border: 1px solid #8a6040; }
.brown { background: #a2765a; }
.cream { background: #f1f3c6; border-color: #dddfb5; }
.dot { width: 7px; height: 7px; margin: 0 4px 0 18px; border: 1px solid #222; border-radius: 50%; }
.dot.green { background: #36864b; }
.dot.pink { background: #cd52dc; }
.vbar { position: absolute; right: 3px; top: 2px; width: 8px; height: 60px; border-radius: 4px; background: #bcbcbc; }
.feat { height: 82px; border: 1px solid #aaa; border-left: 0; background: #fff; }
.fh { height: 17px; line-height: 15px; padding-left: 4px; background: #f5f5f5; border-bottom: 1px solid #ccc; }
.stripes { height: 49px; background: repeating-linear-gradient(#fff 0 15px, #ebf1fd 15px 30px); }
.hbar { height: 14px; border-top: 1px solid #ddd; padding: 3px 0 0 1px; }
.hbar i { display: block; width: 216px; height: 8px; border-radius: 4px; background: #7d7d7d; }
.form { display: flex; align-items: center; height: 29px; padding-left: 4px; gap: 5px; }
.mode { height: 27px; }
.view { margin-top: 7px; }
.combo { width: 135px; height: 21px; line-height: 17px; padding-left: 8px; border: 1px solid #bbb; border-radius: 4px; background: #fff; }
.grey { color: #777; background: #f3f3f3; }
.hlp { margin-left: 70px; }
.canvas { flex: 1; background: #fff; border-bottom: 1px solid #aaa; overflow: hidden; }
.canvas svg { display: block; }
.land { fill: #984b13; stroke: #40301f; stroke-width: .9; }
.lines { fill: none; stroke: #2c1c0b; stroke-width: .85; stroke-opacity: .9; }
.lines[transform] { stroke-width: 2.900; }
.status { flex: none; height: 35px; display: flex; align-items: center; position: relative; padding: 0 0 2px 6px; white-space: nowrap; border-top: 1px solid #ccc; }
.msg { width: 284px; }
.crd { width: 76px; }
.coord { width: 301px; height: 20px; padding-left: 109px; background: #fff; border: 1px solid #b0b0b0; }
.scl { margin-left: 9px; width: 46px; }
.scale { width: 94px; height: 16px; line-height: 16px; background: #fff; display: flex; font-size: 12.500px; justify-content: space-between; }
.scale i { width: 14px; background: linear-gradient(#5fb0f8, #137af2); border-radius: 0 3px 3px 0; display: flex; align-items: center; justify-content: center; }
.rotl { margin-left: 9px; width: 62px; }
.rot { width: 88px; height: 20px; background: #fff; border: 1px solid #b5b5b5; padding-left: 2px; display: flex; }
.rot i { margin-left: auto; width: 43px; background: #ebebeb; }
.spin { margin: 0 8px 0 3px; width: 12px; height: 21px; border: 1px solid #bbb; border-radius: 6px; background: #fff; display: flex; }
.ren { margin-left: 4px; width: 45px; }
.epsg { width: 145px; height: 18px; line-height: 16px; border: 1px solid #aaa; background: linear-gradient(#f5f5f5, #ddd); display: flex; gap: 4px; padding-left: 4px; }
.log { margin-left: 6px; width: 38px; height: 18px; border: 1px solid #aaa; background: linear-gradient(#eee, #ddd); padding-left: 4px; display: flex; }
.resize { position: absolute; right: 0; bottom: 0; }
.menu { position: absolute; left: 152px; top: 484px; width: 249px; height: 309px; padding-top: 4px; background: rgba(246, 246, 246, .98); border-radius: 5px; box-shadow: 0 0 1px rgba(0, 0, 0, .5), 0 5px 14px rgba(0, 0, 0, .35); font-size: 14px; }
.menu div { height: 16px; line-height: 12px; padding-left: 18px; display: flex; position: relative; white-space: nowrap; }
.menu .ic { height: 20px; line-height: 16px; gap: 4px; padding-left: 20px; }
.menu svg { width: 16px; height: 16px; opacity: .85; }
.menu hr { height: 2px; margin: 5px 0; border: 0; background: #dedede; }
.menu .hot { background: #066ad8; color: #fff; -webkit-text-stroke: .3px #fff; }
.sub::after { content: ""; position: absolute; right: 12px; top: -1px; border: 5px solid transparent; border-left: 9px solid #444; border-right: 0; }
```
FILE: map.js
```js
// County mesh. Each zone is [left, top, right, bottom, cell width, cell height, jitter].
// Plains zones are cut into skewed rectangles, the others into Voronoi cells.
const zones = [
  [620, 302, 583, 302, 1, 1, 0],
  [690, 255, 721, 302, 13, 12, .5], [721, 255, 785, 302, 13, 10, .45], [785, 255, 828, 302, 12, 9, .4],
  [690, 302, 749, 347.500, 15, 12, .4], [749, 302, 812, 347.500, 10, 8, .4], [812, 302, 828, 330, 9, 8, .5],
  [690, 347.500, 721, 378, 12, 10, .35],
  [614, 378, 690, 439.500, 15, 12, .6], [690, 378, 721, 439.500, 14, 12, .4],
  [721, 347.500, 749, 361, 28, 14, 0], [749, 347.500, 812, 361, 10, 8, .3],
  [721, 361, 779, 393.500, 10, 9, .3], [779, 361, 812, 393.500, 8, 7, .35],
  [721, 393.500, 838, 439.500, 8.500, 7.600, .14],
  [614, 439.500, 706, 516, 20, 17, .6],
  [706, 439.500, 752, 447, 15, 8, 0], [706, 447, 752, 481, 8.500, 7.500, .04],
  [752, 439.500, 838, 487, 10, 8.500, .65],
  [706, 481, 752, 514, 8, 8, .08], [752, 487, 805, 514, 8, 8, .16],
  [620, 516, 706, 565, 21, 19, .8], [706, 514, 766, 552, 12, 9, .3],
  [766, 514, 838, 580, 8.800, 7.800, .6], [805, 487, 838, 514, 8, 8, .7],
  [706, 552, 766, 612, 10, 11, .3], [766, 580, 810, 612, 10, 8, .5],
  [828, 248, 860, 302, 15, 12, .5], [860, 248, 893, 302, 15, 14, .55], [828, 302, 893, 330, 10, 8, .7],
  [812, 330, 884, 384, 7.500, 6.800, .12],
  [893, 262, 950, 320, 12, 10, .75], [884, 320, 950, 368, 10, 7, .4], [884, 368, 950, 384, 8, 7, .5],
  [950, 270, 1030, 310, 14, 9, .7], [950, 310, 1030, 344, 12, 5.500, .3], [950, 344, 1030, 367, 8, 6, .25],
  [812, 384, 838, 393.500, 8, 7, .2], [838, 384, 900, 439.500, 7.600, 7, .5], [900, 384, 950, 439.500, 7, 7, .65],
  [950, 367, 1000, 400, 8, 6.500, .3], [1000, 357, 1050, 397, 7.500, 7, .45],
  [950, 400, 1000, 445.500, 6, 5.500, .8], [1000, 397, 1060, 445.500, 6.500, 6, .8],
  [1050, 337, 1127, 363, 10, 8, .4], [1050, 363, 1127, 397, 9, 8.500, .7],
  [1127, 316, 1152, 363, 11, 10, .75], [1127, 363, 1165, 397, 6.500, 7, .8], [1108, 316, 1127, 337, 18, 14, .4],
  [1152, 312, 1196, 363, 8, 7, .8], [1165, 363, 1220, 390, 10, 7, .6],
  [1196, 275, 1262, 345, 13, 12, .8], [1196, 345, 1220, 363, 8, 6, .8],
  [1060, 397, 1117, 445.500, 7, 6.500, .85], [1117, 397, 1145, 445.500, 7, 7, .7],
  [838, 439.500, 885, 520, 8.500, 7.500, .65], [885, 439.500, 950, 500, 7.500, 7, .7],
  [950, 445.500, 1045, 500, 6.500, 6.300, .8], [1045, 445.500, 1135, 500, 8.500, 7.500, .65],
  [838, 520, 885, 570, 8.500, 7, .6], [885, 500, 950, 570, 8.500, 7.500, .65],
  [950, 500, 1070, 550, 7, 6.500, .8], [1000, 550, 1062, 635, 11, 9, .4]
].filter(z => z[2] > z[0]);

let seed = 2015;
function rnd() {
  seed = (seed * 1664525 + 1013904223) % 4294967296;
  return seed / 4294967296;
}

// Keep the part of the polygon that is nearer to p than to q.
function nearer(poly, p, q) {
  const nx = q[0] - p[0], ny = q[1] - p[1];
  const c = nx * (p[0] + q[0]) / 2 + ny * (p[1] + q[1]) / 2;
  const out = [];
  for (let i = 0; i < poly.length; i++) {
    const a = poly[i], b = poly[(i + 1) % poly.length];
    const da = nx * a[0] + ny * a[1] - c, db = nx * b[0] + ny * b[1] - c;
    if (da <= 0) out.push(a);
    if (da * db < 0) {
      const t = da / (da - db);
      out.push([a[0] + t * (b[0] - a[0]), a[1] + t * (b[1] - a[1])]);
    }
  }
  return out;
}

let d = "";
function draw(cell) {
  if (cell.length > 2) d += "M" + cell.map(v => v[0].toFixed(1) + " " + v[1].toFixed(1)).join("L") + "Z";
}

// Halve the polygon across its longer side until its pieces are one cell in size.
function halve(poly, cw, ch, tilt) {
  const xs = poly.map(v => v[0]), ys = poly.map(v => v[1]);
  const x0 = Math.min(...xs), x1 = Math.max(...xs), y0 = Math.min(...ys), y1 = Math.max(...ys);
  const w = (x1 - x0) / cw, h = (y1 - y0) / ch;
  if (w * h < 1.450 + rnd() * .4 || poly.length < 3) return draw(poly);
  const k = .5 + (rnd() - .5) * .28, s = (rnd() - .5) * tilt;
  const across = w > h;
  const m = across ? [x0 + (x1 - x0) * k, (y0 + y1) / 2] : [(x0 + x1) / 2, y0 + (y1 - y0) * k];
  const n = across ? [1, s] : [s, 1];
  const p = [m[0] - n[0], m[1] - n[1]], q = [m[0] + n[0], m[1] + n[1]];
  halve(nearer(poly, p, q), cw, ch, tilt);
  halve(nearer(poly, q, p), cw, ch, tilt);
}

for (const [l, t, r, b, cw, ch, j] of zones) {
  const box = [[l, t], [r, t], [r, b], [l, b]];
  if (j >= .3 && (cw >= 9 || (r <= 900 && t < 440))) {
    halve(box, cw, ch, j > .55 ? j * .9 : .08);
    continue;
  }
  const cols = Math.max(1, Math.round((r - l) / cw)), rows = Math.max(1, Math.round((b - t) / ch));
  const w = (r - l) / cols, h = (b - t) / rows, pts = [];
  for (let y = 0; y < rows; y++) {
    const shift = j > .1 && j < .5 ? (rnd() - .5) * .25 : 0;
    for (let x = 0; x < cols; x++) {
      pts.push([l + (x + .5 + shift + (rnd() - .5) * j) * w, t + (y + .5 + (rnd() - .5) * j) * h]);
    }
  }
  const reach = 3 * Math.max(w, h);
  for (const p of pts) {
    let cell = box;
    for (const q of pts) {
      if (q !== p && Math.abs(q[0] - p[0]) < reach && Math.abs(q[1] - p[1]) < reach) cell = nearer(cell, p, q);
    }
    draw(cell);
  }
}
const mesh = document.createElementNS("http://www.w3.org/2000/svg", "path");
mesh.setAttribute("d", d);
document.getElementById("counties").appendChild(mesh);
```
